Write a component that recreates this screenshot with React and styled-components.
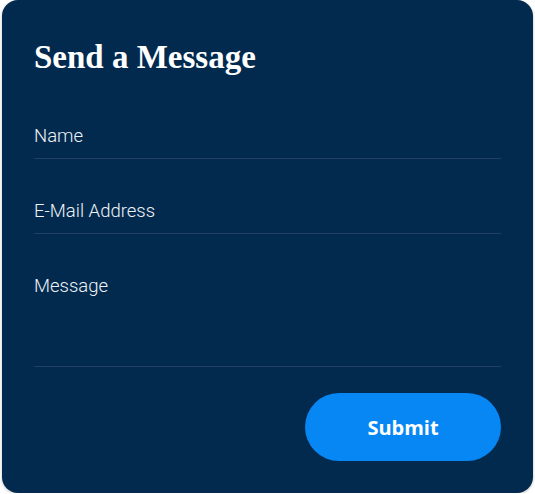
import React from "react";
import styled, { createGlobalStyle } from "styled-components";

const GlobalStyle = createGlobalStyle`
  html, body {
    margin: 0;
    padding: 0;
    background: #ffffff;
  }
  * {
    box-sizing: border-box;
  }
`;

const Card = styled.form`
  width: 531px;
  height: 493px;
  margin-left: 2px;
  padding: 0 32px 32px 32px;
  background: #022a4f;
  border-radius: 16px;
  box-shadow: 0 1px 3px rgba(0, 0, 0, 0.25);
  display: flex;
  flex-direction: column;
`;

const Title = styled.h2`
  margin: 0;
  height: 84px;
  padding-top: 39px;
  font-family: "Liberation Serif", "Times New Roman", serif;
  font-weight: 700;
  font-size: 33px;
  line-height: 36px;
  color: #ffffff;
`;

const fieldStyle = `
  display: block;
  width: 100%;
  margin: 0;
  padding: 40px 0 10px;
  border: none;
  border-bottom: 1px solid #1f4166;
  background: transparent;
  outline: none;
  font-family: Roboto, "Liberation Sans", sans-serif;
  font-weight: 300;
  font-size: 18.5px;
  line-height: 24px;
  color: #eef2f6;

  &::placeholder {
    color: #eef2f6;
    opacity: 1;
  }
`;

const Input = styled.input`
  ${fieldStyle}
  height: 75px;
`;

const TextArea = styled.textarea`
  ${fieldStyle}
  height: 133px;
  resize: none;
`;

const Actions = styled.div`
  display: flex;
  justify-content: flex-end;
  margin-top: 26px;
`;

const SubmitButton = styled.button`
  width: 196px;
  height: 68px;
  border: none;
  border-radius: 34px;
  background: #0787f4;
  color: #ffffff;
  font-family: "Open Sans", "Liberation Sans", sans-serif;
  font-weight: 700;
  font-size: 20px;
  cursor: pointer;
`;

export default function App() {
  return (
    <>
      <GlobalStyle />
      <Card onSubmit={(e) => e.preventDefault()}>
        <Title>Send a Message</Title>
        <Input type="text" placeholder="Name" />
        <Input type="email" placeholder="E-Mail Address" />
        <TextArea placeholder="Message" />
        <Actions>
          <SubmitButton type="submit">Submit</SubmitButton>
        </Actions>
      </Card>
    </>
  );
}
